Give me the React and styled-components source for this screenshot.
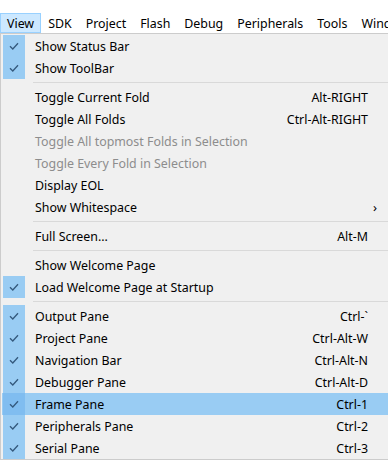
import styled, { createGlobalStyle } from 'styled-components'

const GlobalStyle = createGlobalStyle`
  body {
    margin: 0;
    padding: 0;
    background: #ffffff;
    font-family: "Noto Sans", "Open Sans", sans-serif;
    font-size: 12.4px;
    color: #000;
  }
`

const Page = styled.div`
  width: 388px;
  height: 476px;
  padding-top: 13px;
  box-sizing: border-box;
  overflow: hidden;
`

const MenuBar = styled.div`
  display: flex;
  height: 20px;
  white-space: nowrap;
`

const BarItem = styled.div`
  display: flex;
  align-items: center;
  padding: 0 6px;
  box-sizing: border-box;
  border: 1px solid ${p => (p.active ? '#99d1ff' : 'transparent')};
  background: ${p => (p.active ? '#cce8ff' : 'transparent')};
`

const Dropdown = styled.div`
  width: 386px;
  background: #f0f0f0;
  border: 1px solid #cccccc;
  border-right: none;
  padding: 1px 2px 0 1px;
`

const Row = styled.div`
  display: flex;
  align-items: center;
  height: 22px;
  background: ${p => (p.hot ? '#99ccf3' : 'transparent')};
  color: ${p => (p.disabled ? '#8d8d8d' : '#000')};
`

const CheckCell = styled.div`
  width: 22px;
  height: 22px;
  margin-left: 1px;
  display: flex;
  align-items: center;
  justify-content: center;
  background: ${p => (p.hot ? '#80bdf0' : p.on ? '#99ccf3' : 'transparent')};
`

const Label = styled.div`
  flex: 1;
  padding-left: 10px;
`

const Shortcut = styled.div`
  padding-right: 20px;
`

const Arrow = styled.div`
  width: 20px;
  padding-right: 3px;
  text-align: center;
  font-size: 13px;
`

const Separator = styled.div`
  height: 7px;
  display: flex;
  align-items: center;
  padding-left: 31px;
  &::after {
    content: '';
    flex: 1;
    height: 1px;
    background: #d9d9d9;
  }
`

const Check = () => (
  <svg width="10" height="8" viewBox="0 0 10 8">
    <path d="M1 4.2 L3.8 7 L9 1.2" fill="none" stroke="#34597d" strokeWidth="1.3" />
  </svg>
)

const bar = ['View', 'SDK', 'Project', 'Flash', 'Debug', 'Peripherals', 'Tools', 'Window']

const items = [
  { label: 'Show Status Bar', on: true },
  { label: 'Show ToolBar', on: true },
  { sep: true },
  { label: 'Toggle Current Fold', key: 'Alt-RIGHT' },
  { label: 'Toggle All Folds', key: 'Ctrl-Alt-RIGHT' },
  { label: 'Toggle All topmost Folds in Selection', disabled: true },
  { label: 'Toggle Every Fold in Selection', disabled: true },
  { label: 'Display EOL' },
  { label: 'Show Whitespace', sub: true },
  { sep: true },
  { label: 'Full Screen...', key: 'Alt-M' },
  { sep: true },
  { label: 'Show Welcome Page' },
  { label: 'Load Welcome Page at Startup', on: true },
  { sep: true },
  { label: 'Output Pane', key: 'Ctrl-`', on: true },
  { label: 'Project Pane', key: 'Ctrl-Alt-W', on: true },
  { label: 'Navigation Bar', key: 'Ctrl-Alt-N', on: true },
  { label: 'Debugger Pane', key: 'Ctrl-Alt-D', on: true },
  { label: 'Frame Pane', key: 'Ctrl-1', on: true, hot: true },
  { label: 'Peripherals Pane', key: 'Ctrl-2', on: true },
  { label: 'Serial Pane', key: 'Ctrl-3', on: true },
]

export default function App() {
  return (
    <Page>
      <GlobalStyle />
      <MenuBar>
        {bar.map((b, i) => (
          <BarItem key={b} active={i === 0}>{b}</BarItem>
        ))}
      </MenuBar>
      <Dropdown>
        {items.map((it, i) =>
          it.sep ? (
            <Separator key={i} />
          ) : (
            <Row key={i} hot={it.hot} disabled={it.disabled}>
              <CheckCell on={it.on} hot={it.hot}>{it.on && <Check />}</CheckCell>
              <Label>{it.label}</Label>
              {it.key && <Shortcut>{it.key}</Shortcut>}
              {it.sub && <Arrow>›</Arrow>}
            </Row>
          )
        )}
      </Dropdown>
    </Page>
  )
}
